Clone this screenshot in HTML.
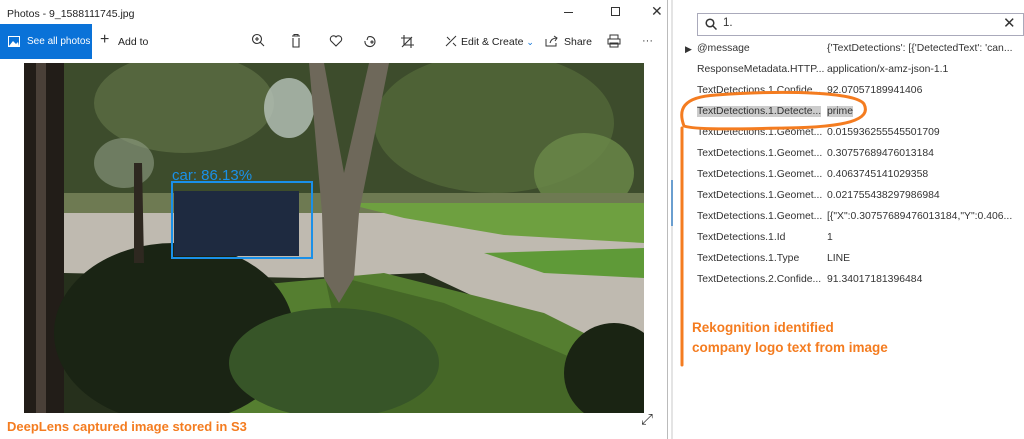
<!DOCTYPE html>
<html><head><meta charset="utf-8"><style>
*{margin:0;padding:0;box-sizing:border-box}
body{width:1024px;height:439px;background:#fff;position:relative;overflow:hidden;font-family:"Liberation Sans",sans-serif}
.a{position:absolute}
.win{left:0;top:0;width:668px;height:439px;background:#fff;border-right:1px solid #bbb}
.tb{font-size:11px;color:#222}
.row{position:absolute;left:697px;font-size:10.4px;color:#333;white-space:nowrap}
.row .v{position:absolute;left:130px}
.or{color:#f47c20;font-weight:bold;font-family:"Liberation Sans",sans-serif}
</style></head><body>
<div class="a win">
 <div class="a tb" style="left:7px;top:8px;font-size:10.5px">Photos - 9_1588111745.jpg</div>
 <div class="a" style="left:564px;top:12px;width:9px;height:1px;background:#333"></div>
 <div class="a" style="left:611px;top:7px;width:9px;height:9px;border:1px solid #333"></div>
 <div class="a" style="left:651px;top:3px;font-size:14px;color:#333">✕</div>
 <div class="a" style="left:0;top:24px;width:92px;height:35px;background:#0a72d8"></div>
 <svg class="a" style="left:8px;top:36px" width="12" height="11"><rect x="0.5" y="0.5" width="11" height="10" fill="none" stroke="#fff"/><path d="M1 10 L5 5 L8 8 L10 6 L11 10Z" fill="#fff"/></svg>
 <div class="a" style="left:27px;top:36px;font-size:10px;color:#fff">See all photos</div>
 <div class="a" style="left:100px;top:31px;font-size:16px;color:#333">+</div>
 <div class="a tb" style="left:118px;top:36px;font-size:10.5px">Add to</div>
 <svg class="a" style="left:250px;top:33px" width="380" height="18" fill="none" stroke="#333" stroke-width="1.1">
  <circle cx="7" cy="6" r="4.5"/><path d="M10 9l4 4M5 6h4M7 4v4"/>
  <path d="M42 3h8M44 3v-1.5h4V3M43 5v9h6V5"/>
  <path d="M86 13l-5-5a3 3 0 0 1 5-4a3 3 0 0 1 5 4z"/>
  <path d="M118 4a5 5 0 1 1-3 4M118 4l-1 3"/><circle cx="122" cy="9" r="1"/>
  <path d="M154 2v10h10M151 5h10v10M152 14l10-10"/>
 </svg>
 <svg class="a" style="left:445px;top:35px" width="12" height="12" fill="none" stroke="#333"><path d="M1 11L11 1M2 2l3 3M8 8l3 3"/></svg>
 <div class="a tb" style="left:461px;top:36px;font-size:10.5px">Edit &amp; Create <span style="color:#0a72d8;font-size:9px">⌄</span></div>
 <svg class="a" style="left:545px;top:35px" width="14" height="12" fill="none" stroke="#333"><path d="M1 4v7h10v-3M5 8c1-4 4-5 7-5M9 1l3 2-2 3"/></svg>
 <div class="a tb" style="left:564px;top:36px;font-size:10.5px">Share</div>
 <svg class="a" style="left:607px;top:34px" width="14" height="14" fill="none" stroke="#333"><path d="M3 5V1h8v4M1 5h12v5H1zM3 9h8v4H3z"/></svg>
 <div class="a" style="left:642px;top:35px;font-size:11px;color:#333">···</div>
 <svg class="a" style="left:24px;top:63px" width="620" height="350" viewBox="0 0 620 350">
  <rect width="620" height="350" fill="#26301c"/>
  <rect x="40" y="0" width="580" height="160" fill="#3d4c2c"/>
  <ellipse cx="160" cy="40" rx="90" ry="50" fill="#55663e"/>
  <ellipse cx="470" cy="60" rx="120" ry="70" fill="#4e6236"/>
  <ellipse cx="265" cy="45" rx="25" ry="30" fill="#b8c4bc" opacity=".8"/>
  <ellipse cx="100" cy="100" rx="30" ry="25" fill="#8f9c86" opacity=".6"/>
  <ellipse cx="560" cy="110" rx="50" ry="40" fill="#6c8a4a" opacity=".8"/>
  <rect x="40" y="130" width="580" height="30" fill="#6e7a52"/>
  <path d="M40 150 L620 150 L620 285 L560 285 L400 210 L280 215 L40 210Z" fill="#bfbab0"/>
  <path d="M320 140 L620 140 L620 180 L480 172 L380 155Z" fill="#6ea040"/>
  <path d="M460 190 L620 185 L620 215 L520 210Z" fill="#5f9a38"/>
  <path d="M200 225 L360 210 L520 250 L620 300 L620 350 L200 350Z" fill="#557e30"/>
  <path d="M300 210 L420 240 L560 300 L620 320 L620 350 L330 350Z" fill="#3e5e24" opacity=".7"/>
  <path d="M0 0 L40 0 L40 350 L0 350Z" fill="#221d18"/>
  <path d="M12 0 L22 0 L22 350 L12 350Z" fill="#4a4038"/>
  <ellipse cx="150" cy="270" rx="120" ry="90" fill="#1a2414"/>
  <ellipse cx="310" cy="300" rx="105" ry="55" fill="#375528"/>
  <ellipse cx="590" cy="310" rx="50" ry="50" fill="#1a2413"/>
  <path d="M285 0 L300 0 L320 110 L345 0 L365 0 L335 150 L330 215 L315 240 L300 215 L298 150 Z" fill="#6e685a"/>
  <path d="M110 100 L118 100 L120 200 L110 200Z" fill="#2e2820"/>
  <rect x="150" y="128" width="125" height="65" fill="#1e2a40"/>
  <rect x="148" y="119" width="140" height="76" fill="none" stroke="#1a90e8" stroke-width="2"/>
  <text x="148" y="117" font-family="Liberation Sans,sans-serif" font-size="15" fill="#1a90e8">car: 86.13%</text>
 </svg>
 <div class="a or" style="left:7px;top:419px;font-size:13px">DeepLens captured image stored in S3</div>
 <div class="a" style="left:641px;top:411px;font-size:15px;color:#333">⤢</div>
</div>
<div class="a" style="left:671px;top:0;width:2px;height:439px;background:#e4e4e4"></div>
<div class="a" style="left:671px;top:180px;width:2px;height:46px;background:#6a9ecf"></div>
<div class="a" style="left:697px;top:13px;width:327px;height:23px;border:1px solid #aab;background:#fff"></div>
<svg class="a" style="left:705px;top:18px" width="12" height="12" fill="none" stroke="#333" stroke-width="1.5"><circle cx="5" cy="5" r="3.8"/><path d="M8 8l3.5 3.5"/></svg>
<div class="a" style="left:723px;top:17px;font-size:11.5px;color:#333">1.</div>
<div class="a" style="left:1003px;top:14px;font-size:15px;color:#333">✕</div>
<div class="a" style="left:685px;top:44px;font-size:9px;color:#333">▶</div>
<div class="row" style="top:43px">@message<span class="v">{'TextDetections': [{'DetectedText': 'can...</span></div>
<div class="row" style="top:64px">ResponseMetadata.HTTP...<span class="v">application/x-amz-json-1.1</span></div>
<div class="row" style="top:85px">TextDetections.1.Confide...<span class="v">92.07057189941406</span></div>
<div class="row" style="top:106px"><span style="background:#ccc">TextDetections.1.Detecte...</span><span class="v" style="background:#ccc">prime</span></div>
<div class="row" style="top:127px">TextDetections.1.Geomet...<span class="v">0.015936255545501709</span></div>
<div class="row" style="top:148px">TextDetections.1.Geomet...<span class="v">0.30757689476013184</span></div>
<div class="row" style="top:169px">TextDetections.1.Geomet...<span class="v">0.4063745141029358</span></div>
<div class="row" style="top:190px">TextDetections.1.Geomet...<span class="v">0.021755438297986984</span></div>
<div class="row" style="top:211px">TextDetections.1.Geomet...<span class="v">[{"X":0.30757689476013184,"Y":0.406...</span></div>
<div class="row" style="top:232px">TextDetections.1.Id<span class="v">1</span></div>
<div class="row" style="top:253px">TextDetections.1.Type<span class="v">LINE</span></div>
<div class="row" style="top:274px">TextDetections.2.Confide...<span class="v">91.34017181396484</span></div>
<svg class="a" style="left:676px;top:90px" width="200" height="280" fill="none" stroke="#f47c20" stroke-width="3">
 <path d="M8 36 C2 20 6 7 40 5 C110 0 180 2 188 14 C196 30 170 37 110 38 C60 39 20 40 8 36Z"/>
 <path d="M6 38 V275" stroke-linecap="round"/>
</svg>
<div class="a or" style="left:692px;top:318px;font-size:13.5px;line-height:20px">Rekognition identified<br>company logo text from image</div>
</body></html>
